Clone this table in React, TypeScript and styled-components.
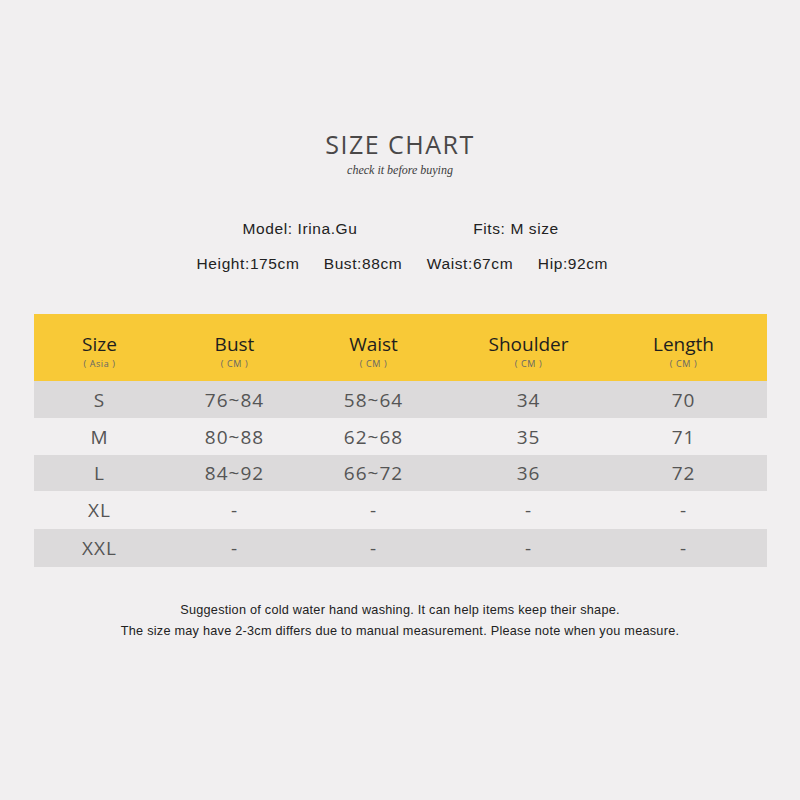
import React from 'react';
import { createGlobalStyle, styled } from 'styled-components';

const GlobalStyle = createGlobalStyle`
	html, body {
		margin: 0;
		padding: 0;
		background: #f1eff0;
	}
`;

// 전체 페이지
const Page = styled.div`
	width: 800px;
	height: 800px;
	box-sizing: border-box;
	padding-top: 127px;
	display: flex;
	flex-direction: column;
	align-items: center;
	background: #f1eff0;
`;

const Title = styled.h1`
	margin: 0;
	font-family: 'Open Sans', sans-serif;
	font-weight: 400;
	font-size: 25px;
	line-height: 34px;
	letter-spacing: 1.5px;
	color: #4a4848;
`;

const Subtitle = styled.div`
	margin-top: 2px;
	font-family: 'Liberation Serif', serif;
	font-style: italic;
	font-size: 12px;
	color: #3c3c3c;
`;

const InfoRow = styled.div<{ $top: number }>`
	display: grid;
	margin-top: ${(p) => p.$top}px;
	width: 800px;
	font-family: 'Liberation Sans', Arial, sans-serif;
	font-size: 15.5px;
	letter-spacing: 0.6px;
	color: #222;
	line-height: 18px;
`;

const InfoItem = styled.span<{ $center: number }>`
	grid-area: 1 / 1;
	justify-self: start;
	transform: translateX(calc(${(p) => p.$center}px - 50%));
	white-space: nowrap;
`;

const Table = styled.div`
	margin-top: 41px;
	width: 733px;
	display: flex;
	flex-direction: column;
`;

const Row = styled.div<{ $bg: string; $h: number }>`
	display: grid;
	grid-template-columns: 132px 138px 140px 170px 140px;
	height: ${(p) => p.$h}px;
	align-items: center;
	background: ${(p) => p.$bg};
`;

const HeadCell = styled.div`
	display: flex;
	flex-direction: column;
	align-items: center;
	padding-top: 6px;
	font-family: 'Open Sans', sans-serif;
	color: #1e1e1e;
`;

const HeadTitle = styled.span`
	font-size: 19px;
	line-height: 24px;
`;

const HeadSub = styled.span`
	margin-top: 2px;
	font-size: 9px;
	line-height: 12px;
	color: #666;
	letter-spacing: 0.6px;
`;

const Cell = styled.div`
	text-align: center;
	font-family: 'Open Sans', sans-serif;
	font-size: 19px;
	color: #555;
	letter-spacing: 1px;
`;

const Notes = styled.div`
	margin-top: 33px;
	font-family: 'Liberation Sans', Arial, sans-serif;
	font-size: 12.7px;
	line-height: 21px;
	color: #222;
	text-align: center;
	letter-spacing: 0.25px;
`;

const headers = [
	['Size', '( Asia )'],
	['Bust', '( CM )'],
	['Waist', '( CM )'],
	['Shoulder', '( CM )'],
	['Length', '( CM )'],
];

const rows = [
	{ cells: ['S', '76~84', '58~64', '34', '70'], h: 37 },
	{ cells: ['M', '80~88', '62~68', '35', '71'], h: 37 },
	{ cells: ['L', '84~92', '66~72', '36', '72'], h: 36 },
	{ cells: ['XL', '-', '-', '-', '-'], h: 38 },
	{ cells: ['XXL', '-', '-', '-', '-'], h: 38 },
];

const App = () => {
	return (
		<>
			<GlobalStyle />
			<Page>
				<Title>SIZE CHART</Title>
				<Subtitle>check it before buying</Subtitle>
				<InfoRow $top={42}>
					<InfoItem $center={300}>Model: Irina.Gu</InfoItem>
					<InfoItem $center={516}>Fits: M size</InfoItem>
				</InfoRow>
				<InfoRow $top={17}>
					<InfoItem $center={248}>Height:175cm</InfoItem>
					<InfoItem $center={363}>Bust:88cm</InfoItem>
					<InfoItem $center={470}>Waist:67cm</InfoItem>
					<InfoItem $center={573}>Hip:92cm</InfoItem>
				</InfoRow>
				<Table>
					<Row $bg="#f8c937" $h={67}>
						{headers.map(([t, s]) => (
							<HeadCell key={t}>
								<HeadTitle>{t}</HeadTitle>
								<HeadSub>{s}</HeadSub>
							</HeadCell>
						))}
					</Row>
					{rows.map((r, i) => (
						<Row key={r.cells[0]} $bg={i % 2 === 0 ? '#dcdadb' : '#f1eff0'} $h={r.h}>
							{r.cells.map((c, j) => (
								<Cell key={j}>{c}</Cell>
							))}
						</Row>
					))}
				</Table>
				<Notes>
					Suggestion of cold water hand washing. It can help items keep their shape.
					<br />
					The size may have 2-3cm differs due to manual measurement. Please note when you measure.
				</Notes>
			</Page>
		</>
	);
};

export default App;
